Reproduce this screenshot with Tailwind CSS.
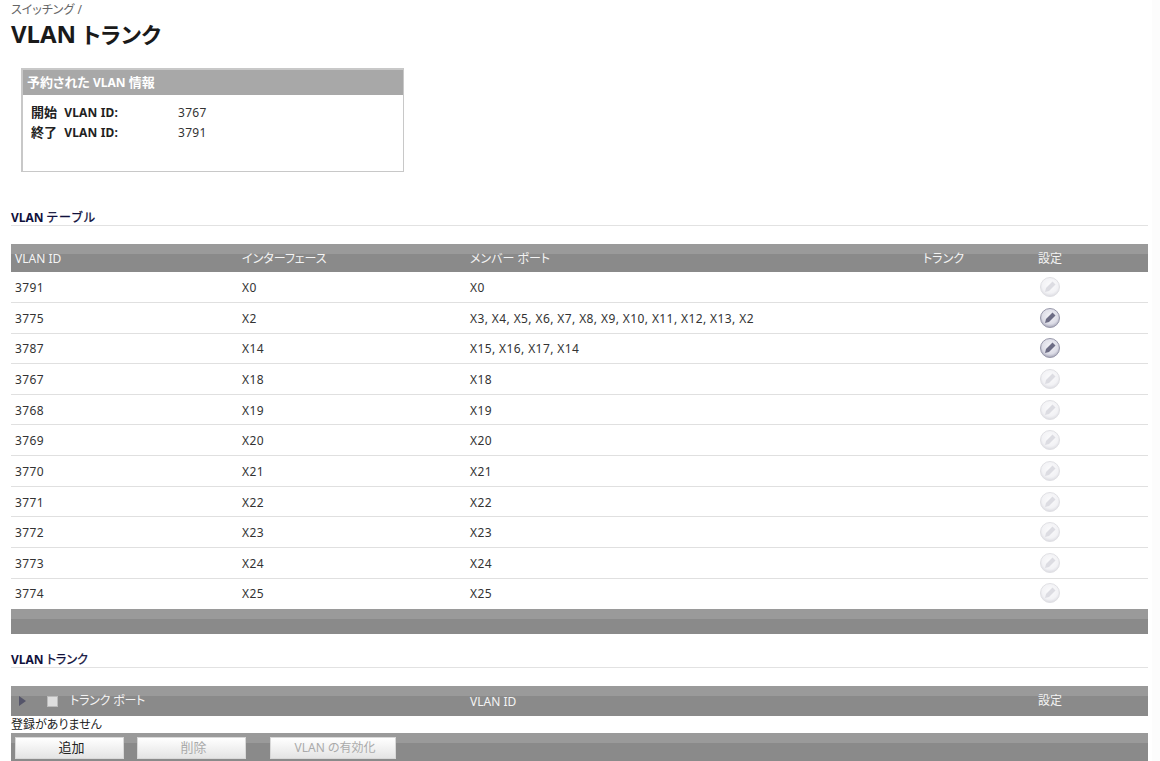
<!DOCTYPE html>
<html lang="ja">
<head>
<meta charset="utf-8">
<script src="https://cdn.jsdelivr.net/npm/@tailwindcss/browser@4"></script>
</head>
<body class="bg-white overflow-hidden">
<svg class="absolute w-0 h-0"><defs>
  <radialGradient id="on" cx="50%" cy="40%" r="60%"><stop offset="0" stop-color="#f4f4f8"/><stop offset="0.7" stop-color="#dcdce6"/><stop offset="1" stop-color="#a4a4b6"/></radialGradient>
  <radialGradient id="off" cx="50%" cy="40%" r="60%"><stop offset="0" stop-color="#fbfbfc"/><stop offset="0.7" stop-color="#f2f2f5"/><stop offset="1" stop-color="#dcdce2"/></radialGradient>
</defs></svg>
<div class="w-[1160px] h-[761px] overflow-hidden font-['Noto_Sans','Noto_Sans_CJK_JP',sans-serif] [font-feature-settings:'palt'] text-[12px] text-[#333] pl-[11px] pr-[4px] border-r-[8px] border-[#fcfcfc]">
  <div class="h-[17px] leading-[19px] text-[#666]">スイッチング&nbsp;/</div>
  <h1 class="h-[34px] leading-[34px] text-[24px] font-bold text-[#1a1a1a]">VLAN <span class="text-[22px]">トランク</span></h1>

  <section class="ml-[10px] mt-[17px] w-[383px] h-[104px] border-t-2 border-l-2 border-r border-b border-[#c8c8c8]">
    <div class="h-[25px] leading-[25px] bg-[#a8a8a8] text-white font-bold pl-[4px]"><span class="text-[13px]">予約された</span> VLAN <span class="text-[13px]">情報</span></div>
    <div class="pl-[8px] pt-[7px]">
      <div class="flex h-[20px] leading-[20px]"><div class="w-[147px] font-bold text-[#222]"><span class="text-[13px]">開始</span>&nbsp; <span class="ml-[1px] tracking-[0.15px]">VLAN ID:</span></div><div class="tracking-[0.3px] pt-[1px]">3767</div></div>
      <div class="flex h-[20px] leading-[20px]"><div class="w-[147px] font-bold text-[#222]"><span class="text-[13px]">終了</span>&nbsp; <span class="ml-[1px] tracking-[0.15px]">VLAN ID:</span></div><div class="tracking-[0.3px] pt-[1px]">3791</div></div>
    </div>
  </section>

  <h2 class="mt-[37px] h-[17px] leading-[17px] text-[12px] text-[#10103c] border-b border-[#e2e2e2]"><b>VLAN</b> <span class="tracking-[1.5px] [-webkit-text-stroke:0.3px]">テーブル</span></h2>

  <div class="mt-[18px] grid grid-cols-[227px_228px_452px_116px_1fr] px-[4px] pt-[1px] h-[28px] items-center text-[#f4f4f4] bg-[linear-gradient(#9a9a9a_0,#9a9a9a_10px,#8a8a8a_10px)]">
    <div>VLAN ID</div><div>インターフェース</div><div>メンバー ポート</div><div class="pl-[1px]">トランク</div><div>設定</div>
  </div>

  <div class="grid grid-cols-[227px_228px_452px_116px_1fr] px-[4px] h-[31px] items-center border-b border-[#e0e0e0] tracking-[0.4px] [&>div]:pt-[2px]">
    <div>3791</div><div>X0</div><div>X0</div><div></div>
    <svg class="w-[22px] h-[22px] ml-[1px]" viewBox="0 0 22 22"><circle cx="11" cy="11" r="9.5" fill="url(#off)" stroke="#e0e0e4"/><path d="M6 16l1-4 6.5-6.5 3 3-6.5 6.5z" fill="#dcdce2"/></svg>
  </div>
  <div class="grid grid-cols-[227px_228px_452px_116px_1fr] px-[4px] h-[31px] items-center border-b border-[#e0e0e0] tracking-[0.4px] [&>div]:pt-[2px]">
    <div>3775</div><div>X2</div><div>X3, X4, X5, X6, X7, X8, X9, X10, X11, X12, X13, X2</div><div></div>
    <svg class="w-[22px] h-[22px] ml-[1px]" viewBox="0 0 22 22"><circle cx="11" cy="11" r="9.5" fill="url(#on)" stroke="#9898aa"/><path d="M6 16l1-4 6.5-6.5 3 3-6.5 6.5z" fill="#6c6c84"/></svg>
  </div>
  <div class="grid grid-cols-[227px_228px_452px_116px_1fr] px-[4px] h-[30px] items-center border-b border-[#e0e0e0] tracking-[0.4px]">
    <div>3787</div><div>X14</div><div>X15, X16, X17, X14</div><div></div>
    <svg class="w-[22px] h-[22px] ml-[1px] mb-[2px]" viewBox="0 0 22 22"><circle cx="11" cy="11" r="9.5" fill="url(#on)" stroke="#9898aa"/><path d="M6 16l1-4 6.5-6.5 3 3-6.5 6.5z" fill="#6c6c84"/></svg>
  </div>
  <div class="grid grid-cols-[227px_228px_452px_116px_1fr] px-[4px] h-[31px] items-center border-b border-[#e0e0e0] tracking-[0.4px] [&>div]:pt-[2px]">
    <div>3767</div><div>X18</div><div>X18</div><div></div>
    <svg class="w-[22px] h-[22px] ml-[1px]" viewBox="0 0 22 22"><circle cx="11" cy="11" r="9.5" fill="url(#off)" stroke="#e0e0e4"/><path d="M6 16l1-4 6.5-6.5 3 3-6.5 6.5z" fill="#dcdce2"/></svg>
  </div>
  <div class="grid grid-cols-[227px_228px_452px_116px_1fr] px-[4px] h-[30px] items-center border-b border-[#e0e0e0] tracking-[0.4px] [&>div]:pt-[2px]">
    <div>3768</div><div>X19</div><div>X19</div><div></div>
    <svg class="w-[22px] h-[22px] ml-[1px]" viewBox="0 0 22 22"><circle cx="11" cy="11" r="9.5" fill="url(#off)" stroke="#e0e0e4"/><path d="M6 16l1-4 6.5-6.5 3 3-6.5 6.5z" fill="#dcdce2"/></svg>
  </div>
  <div class="grid grid-cols-[227px_228px_452px_116px_1fr] px-[4px] h-[31px] items-center border-b border-[#e0e0e0] tracking-[0.4px] [&>div]:pt-[2px]">
    <div>3769</div><div>X20</div><div>X20</div><div></div>
    <svg class="w-[22px] h-[22px] ml-[1px]" viewBox="0 0 22 22"><circle cx="11" cy="11" r="9.5" fill="url(#off)" stroke="#e0e0e4"/><path d="M6 16l1-4 6.5-6.5 3 3-6.5 6.5z" fill="#dcdce2"/></svg>
  </div>
  <div class="grid grid-cols-[227px_228px_452px_116px_1fr] px-[4px] h-[31px] items-center border-b border-[#e0e0e0] tracking-[0.4px] [&>div]:pt-[2px]">
    <div>3770</div><div>X21</div><div>X21</div><div></div>
    <svg class="w-[22px] h-[22px] ml-[1px]" viewBox="0 0 22 22"><circle cx="11" cy="11" r="9.5" fill="url(#off)" stroke="#e0e0e4"/><path d="M6 16l1-4 6.5-6.5 3 3-6.5 6.5z" fill="#dcdce2"/></svg>
  </div>
  <div class="grid grid-cols-[227px_228px_452px_116px_1fr] px-[4px] h-[30px] items-center border-b border-[#e0e0e0] tracking-[0.4px] [&>div]:pt-[2px]">
    <div>3771</div><div>X22</div><div>X22</div><div></div>
    <svg class="w-[22px] h-[22px] ml-[1px]" viewBox="0 0 22 22"><circle cx="11" cy="11" r="9.5" fill="url(#off)" stroke="#e0e0e4"/><path d="M6 16l1-4 6.5-6.5 3 3-6.5 6.5z" fill="#dcdce2"/></svg>
  </div>
  <div class="grid grid-cols-[227px_228px_452px_116px_1fr] px-[4px] h-[31px] items-center border-b border-[#e0e0e0] tracking-[0.4px] [&>div]:pt-[2px]">
    <div>3772</div><div>X23</div><div>X23</div><div></div>
    <svg class="w-[22px] h-[22px] ml-[1px]" viewBox="0 0 22 22"><circle cx="11" cy="11" r="9.5" fill="url(#off)" stroke="#e0e0e4"/><path d="M6 16l1-4 6.5-6.5 3 3-6.5 6.5z" fill="#dcdce2"/></svg>
  </div>
  <div class="grid grid-cols-[227px_228px_452px_116px_1fr] px-[4px] h-[31px] items-center border-b border-[#e0e0e0] tracking-[0.4px] [&>div]:pt-[2px]">
    <div>3773</div><div>X24</div><div>X24</div><div></div>
    <svg class="w-[22px] h-[22px] ml-[1px]" viewBox="0 0 22 22"><circle cx="11" cy="11" r="9.5" fill="url(#off)" stroke="#e0e0e4"/><path d="M6 16l1-4 6.5-6.5 3 3-6.5 6.5z" fill="#dcdce2"/></svg>
  </div>
  <div class="grid grid-cols-[227px_228px_452px_116px_1fr] px-[4px] h-[30px] items-center tracking-[0.4px]">
    <div>3774</div><div>X25</div><div>X25</div><div></div>
    <svg class="w-[22px] h-[22px] ml-[1px] mb-[2px]" viewBox="0 0 22 22"><circle cx="11" cy="11" r="9.5" fill="url(#off)" stroke="#e0e0e4"/><path d="M6 16l1-4 6.5-6.5 3 3-6.5 6.5z" fill="#dcdce2"/></svg>
  </div>
  <div class="h-[25px] bg-[linear-gradient(#9a9a9a_0,#9a9a9a_10px,#8a8a8a_10px)]"></div>

  <h2 class="mt-[17px] h-[17px] leading-[17px] text-[12px] text-[#10103c] border-b border-[#e2e2e2]"><b>VLAN</b> <span class="[-webkit-text-stroke:0.3px]">トランク</span></h2>

  <div class="mt-[18px] grid grid-cols-[455px_568px_1fr] pl-[4px] h-[30px] items-center text-[#f4f4f4] bg-[linear-gradient(#9a9a9a_0,#9a9a9a_10px,#8a8a8a_10px)]">
    <div class="flex items-center">
      <svg class="w-[10px] h-[12px] ml-[3px]" viewBox="0 0 10 12"><path d="M1 1l7 5-7 5z" fill="#55556a"/></svg>
      <span class="w-[11px] h-[11px] ml-[19px] bg-[#dedede] border border-[#bbb]"></span>
      <span class="ml-[12px] tracking-[-0.2px]">トランク ポート</span>
    </div>
    <div class="pt-[2px]">VLAN ID</div>
    <div>設定</div>
  </div>
  <div class="h-[17px] leading-[17px] text-[#222]">登録がありません</div>
  <div class="h-[30px] flex items-start pl-[4px] pt-[4px] bg-[linear-gradient(#9a9a9a_0,#9a9a9a_10px,#8a8a8a_10px)]">
    <button class="w-[109px] h-[22px] text-[13px] text-[#222] pl-[4px] bg-[linear-gradient(#ffffff,#e4e4e4)] border border-[#d8d8d8]">追加</button>
    <button class="w-[109px] h-[22px] ml-[13px] text-[13px] text-[#aaa] pl-[4px] bg-[linear-gradient(#ffffff,#e4e4e4)] border border-[#d8d8d8]">削除</button>
    <button class="w-[126px] h-[22px] ml-[24px] text-[12px] text-[#aaa] pl-[4px] bg-[linear-gradient(#ffffff,#e4e4e4)] border border-[#d8d8d8]">VLAN の有効化</button>
  </div>
</div>
</body>
</html>
